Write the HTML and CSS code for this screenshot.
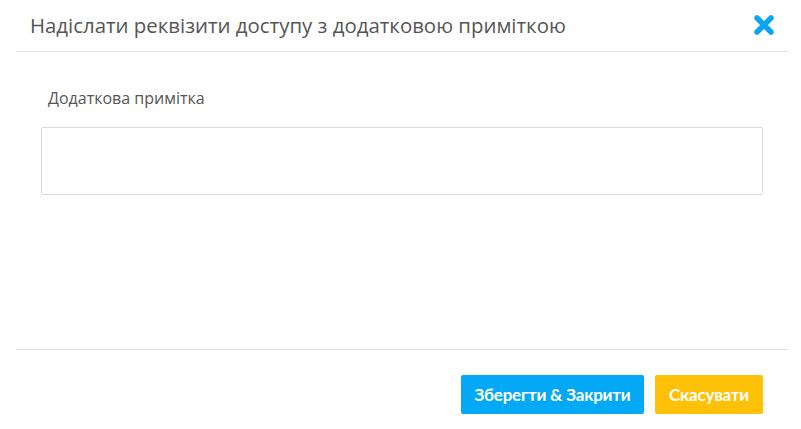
FILE: index.html
```html
<!DOCTYPE html>
<html lang="uk">
<head>
<meta charset="utf-8">
<link rel="stylesheet" href="styles.css">
</head>
<body>
<div class="modal">
  <div class="modal-header">
    <h1 class="modal-title">Надіслати реквізити доступу з додатковою приміткою</h1>
    <button class="close-btn" aria-label="Закрити">
      <svg width="22" height="22" viewBox="0 0 22 22"><path d="M4 4 L18 18 M18 4 L4 18" stroke="#0ca6f0" stroke-width="5.5" stroke-linecap="round"/></svg>
    </button>
  </div>
  <div class="modal-body">
    <label class="field-label">Додаткова примітка</label>
    <textarea class="field-input"></textarea>
  </div>
  <div class="modal-footer">
    <button class="btn btn-save">Зберегти &amp; Закрити</button>
    <button class="btn btn-cancel">Скасувати</button>
  </div>
</div>
</body>
</html>
```
FILE: styles.css
```css
* { box-sizing: border-box; }
html, body { margin: 0; padding: 0; background: #fff; }
body { font-family: "Open Sans", "Noto Sans", sans-serif; color: #555; }
.modal { margin: 0 13px 0 16px; height: 429px; display: flex; flex-direction: column; }
.modal-header {
  height: 52px;
  border-bottom: 1px solid #e3e3e3;
  display: flex;
  align-items: center;
  justify-content: space-between;
  padding: 0 13px 2px 14px;
}
.modal-title { margin: 0; font-size: 20.4px; font-weight: 400; color: #555; }
.close-btn { border: 0; background: none; padding: 0; display: flex; cursor: pointer; }
.modal-body { height: 298px; padding: 35px 25px 0 25px; display: flex; flex-direction: column; border-bottom: 1px solid #e3e3e3; }
.field-label { font-size: 16px; color: #555; padding-left: 7px; line-height: 22px; margin-bottom: 18px; }
.field-input { height: 68px; border: 1px solid #dadada; border-radius: 2px; resize: none; font: inherit; }
.modal-footer { display: flex; justify-content: flex-end; gap: 11px; padding: 25px 25px 0 0; }
.btn {
  border: 0;
  border-radius: 2px;
  height: 39px;
  padding: 0 10px;
  font-family: "Lato", "Noto Sans", sans-serif;
  font-weight: 700;
  font-size: 17px;
  letter-spacing: -0.2px;
  color: #fff;
}
.btn-save { background: #03a9f4; width: 183px; }
.btn-cancel { background: #ffc107; width: 108px; }
```
